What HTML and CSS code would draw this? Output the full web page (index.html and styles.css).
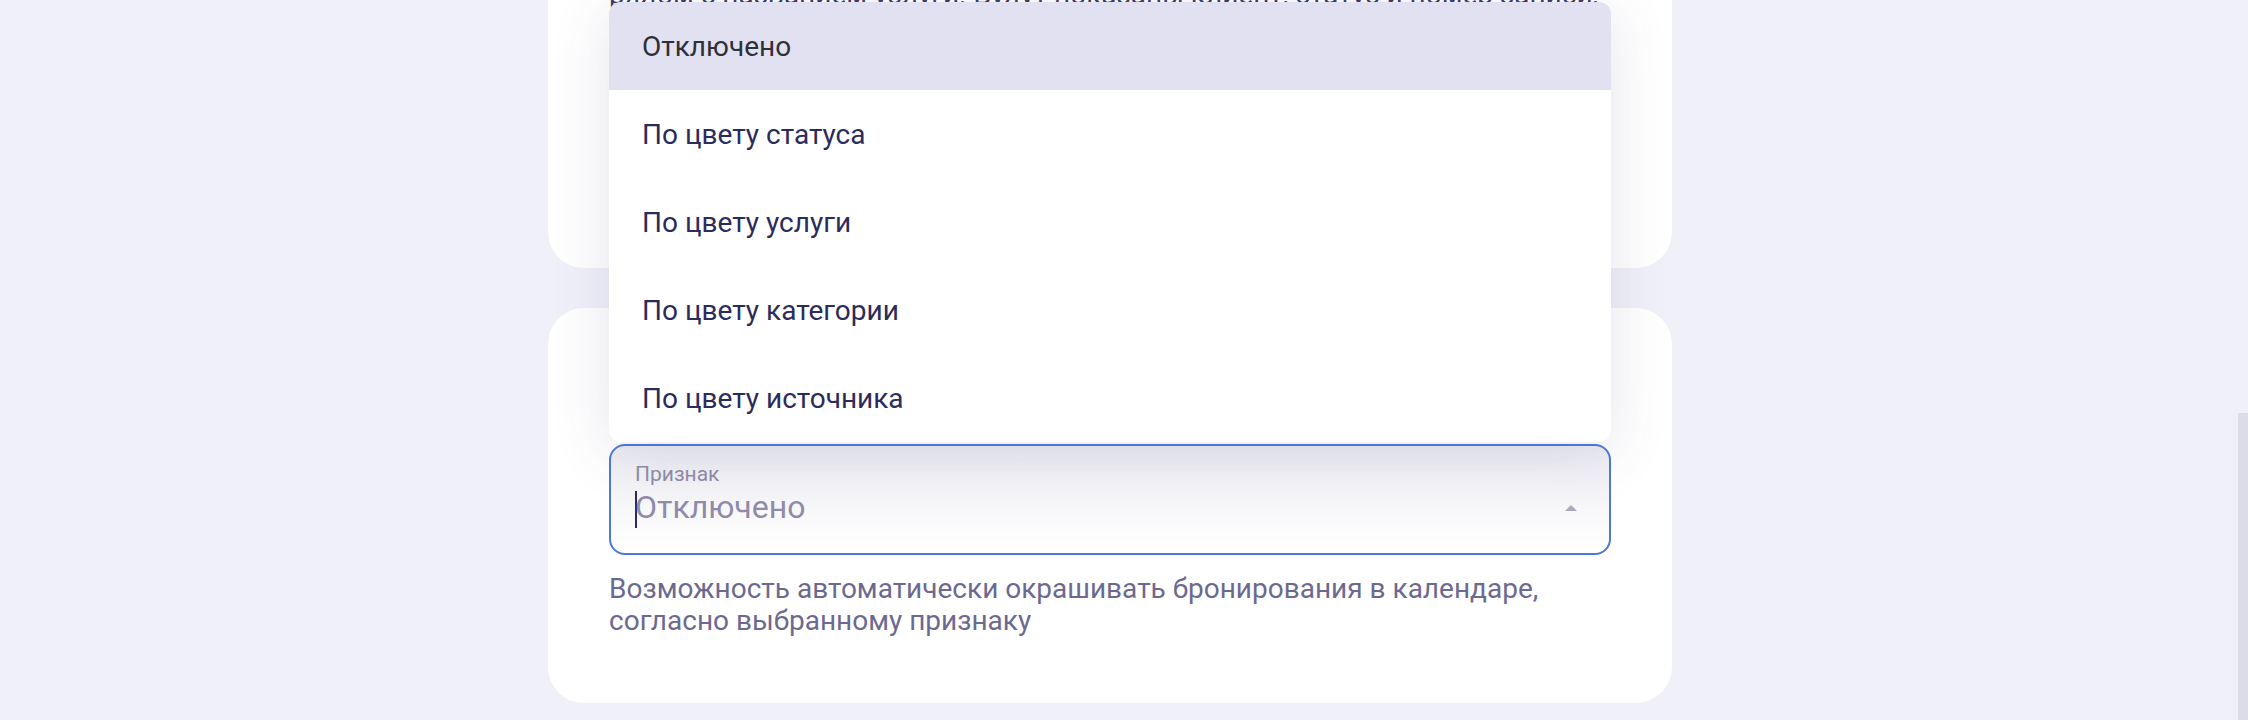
FILE: index.html
```html
<!DOCTYPE html>
<html lang="ru">
<head>
  <meta charset="UTF-8">
  <title>Настройки календаря</title>
  <link rel="stylesheet" href="styles.css">
</head>
<body>
  <div class="page">
    <div class="column">
      <section class="card card-top">
        <p class="card-text">рядом с названием услуги. Будут показаны клиент, статус и номер записи,</p>
      </section>

      <section class="card card-color">
        <div class="select">
          <ul class="menu">
            <li class="menu-item active">Отключено</li>
            <li class="menu-item">По цвету статуса</li>
            <li class="menu-item">По цвету услуги</li>
            <li class="menu-item">По цвету категории</li>
            <li class="menu-item">По цвету источника</li>
          </ul>
          <div class="field">
            <div class="field-body">
              <span class="field-label">Признак</span>
              <span class="field-value"><span class="caret"></span>Отключено</span>
            </div>
            <span class="arrow"></span>
          </div>
        </div>
        <p class="hint">Возможность автоматически окрашивать бронирования в календаре,<br>согласно выбранному признаку</p>
      </section>
    </div>

    <div class="scroll-track">
      <div class="scroll-thumb"></div>
    </div>
  </div>
</body>
</html>
```

FILE: styles.css
```css
body {
  margin: 0;
  height: 720px;
  overflow: hidden;
  background: #f0f0f9;
  font-family: Roboto, "Noto Sans", sans-serif;
}
.page {
  display: flex;
  height: 720px;
}
.column {
  width: 1124px;
  margin-left: 548px;
}
.card {
  background: #fff;
  border-radius: 0 0 36px 36px;
  padding: 0 61px;
  box-sizing: border-box;
}
.card-top {
  height: 268px;
  display: flex;
  flex-direction: column;
}
.card-text {
  margin: -22px 0 0;
  font-size: 28px;
  line-height: 34px;
  color: #3b3b63;
  white-space: nowrap;
}
.card-color {
  margin-top: 40px;
  border-radius: 36px;
  padding: 136px 61px 66px;
}
.select {
  position: relative;
}
.menu {
  position: absolute;
  left: 0;
  right: 0;
  bottom: calc(100% + 2px);
  margin: 0;
  padding: 0;
  list-style: none;
  background: #fff;
  border-radius: 12px;
  overflow: hidden;
  box-shadow: 0 10px 60px rgba(70, 70, 130, 0.14);
}
.menu-item {
  height: 88px;
  padding: 0 33px;
  display: flex;
  align-items: center;
  font-size: 28px;
  color: #2b2b5c;
}
.menu-item.active {
  background: #e2e1f1;
  color: #2f2f38;
}
.field {
  height: 111px;
  box-sizing: border-box;
  border: 2px solid #4d78dc;
  border-radius: 16px;
  background: linear-gradient(180deg, #ececf1 0%, #fbfbfc 75%, #fff 100%);
  padding: 16px 32px 0 24px;
  display: flex;
  align-items: flex-start;
}
.field-body {
  display: flex;
  flex-direction: column;
}
.field-label {
  font-size: 21px;
  line-height: 24px;
  color: #8e8ca6;
}
.field-value {
  font-size: 32px;
  line-height: 42px;
  color: #8f8ba9;
}
.caret {
  display: inline-block;
  width: 2px;
  height: 37px;
  margin-right: -2px;
  vertical-align: middle;
  background: #2b2b5c;
}
.arrow {
  margin-left: auto;
  align-self: center;
  width: 0;
  height: 0;
  border-left: 6px solid transparent;
  border-right: 6px solid transparent;
  border-bottom: 6px solid #aaa7bf;
}
.hint {
  margin: 18px 0 0;
  font-size: 28px;
  line-height: 32px;
  color: #6c6990;
}
.scroll-track {
  margin-left: auto;
  width: 10px;
}
.scroll-thumb {
  margin-top: 413px;
  height: 307px;
  background: #dcdce8;
}
```
